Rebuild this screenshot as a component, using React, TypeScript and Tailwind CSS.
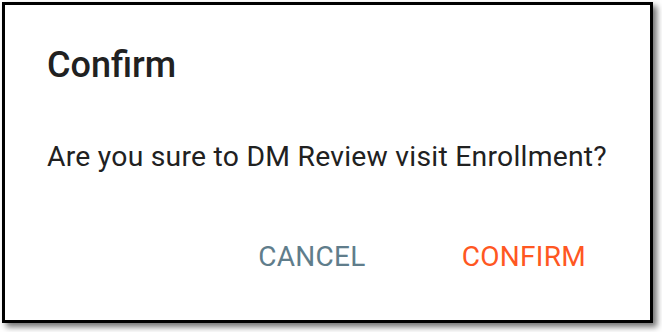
import React from "react";

export default function App() {
  return (
    <div className="w-[662px] h-[332px] bg-white p-[2px]" style={{ fontFamily: "Roboto, 'Liberation Sans', sans-serif" }}>
      <div className="w-[651px] h-[321px] border-[3px] border-black bg-white shadow-[4px_4px_6px_rgba(0,0,0,0.55)] flex flex-col">
        <div className="mt-[42px] ml-[42px] text-[36px] leading-[36px] font-medium text-[#212121]">Confirm</div>
        <div className="mt-[60px] ml-[42px] text-[28.3px] leading-[28px] text-[#212121] tracking-[0.25px]">
          Are you sure to DM Review visit Enrollment?
        </div>
        <div className="mt-[72px] flex justify-end pr-[64px] gap-[96px]">
          <span className="text-[28px] leading-[28px] tracking-[0.3px] text-[#607d8b]">CANCEL</span>
          <span className="text-[28px] leading-[28px] tracking-[0.3px] text-[#ff5722]">CONFIRM</span>
        </div>
      </div>
    </div>
  );
}
